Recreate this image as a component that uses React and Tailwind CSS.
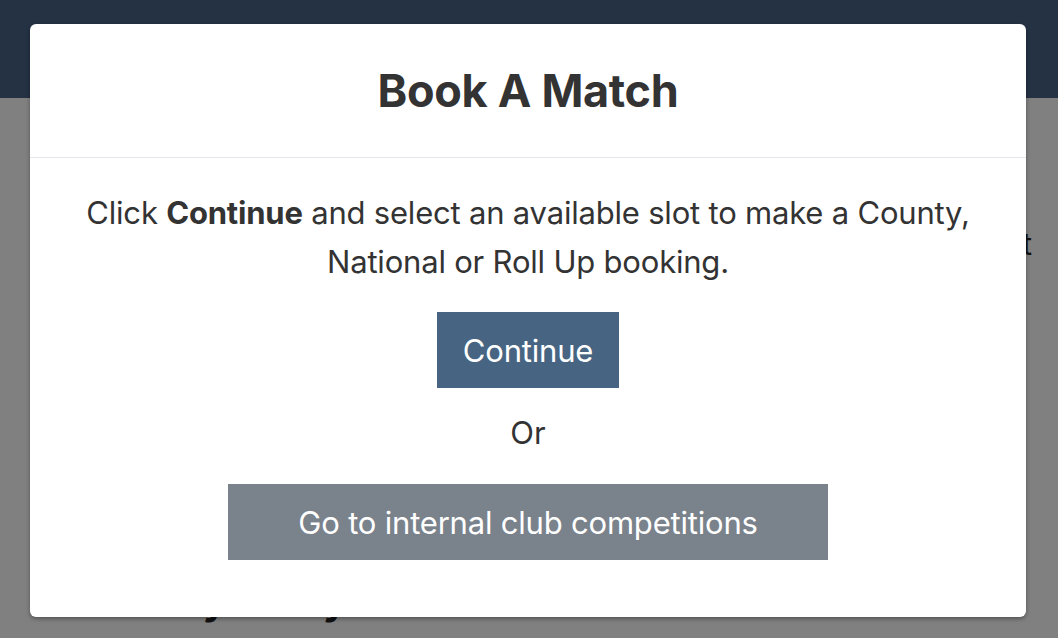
import React from 'react';

const BookMatchModal = () => (
  <div className="absolute left-[30px] top-[24px] w-[996px] h-[593px] bg-white rounded-md shadow-[0_2px_4px_rgba(0,0,0,0.35)] text-[#333] flex flex-col">
    <div className="h-[134px] border-b border-[#e3e7eb] flex items-center justify-center">
      <h2 className="text-[45px] font-bold tracking-[-0.3px] leading-none">Book A Match</h2>
    </div>
    <div className="flex flex-col items-center pt-[30px] text-[31px] leading-[49px] text-center">
      <p className="px-4 tracking-[-0.2px]">
        Click <strong className="font-bold">Continue</strong> and select an available slot to make a County,
        <br />
        National or Roll Up booking.
      </p>
      <button className="mt-[26px] w-[182px] h-[76px] bg-[#476582] text-white text-[31px] tracking-[-0.2px]">Continue</button>
      <p className="mt-[20px]">Or</p>
      <button className="mt-[27px] w-[600px] h-[76px] bg-[#7a828c] text-white text-[31px] tracking-[-0.2px]">
        Go to internal club competitions
      </button>
    </div>
  </div>
);

export default function App() {
  return (
    <div className="relative w-[1058px] h-[638px] overflow-hidden bg-[#808080] font-['Inter',sans-serif]">
      <div className="h-[98px] bg-[#253244]"></div>
      <div className="relative">
        <p className="absolute right-[26px] top-[124px] text-[30px] text-[#111]">Next</p>
        <p className="absolute left-[55px] top-[478px] text-[40px] leading-[48px] font-bold text-[#111]">Your day today</p>
      </div>
      <BookMatchModal />
    </div>
  );
}
